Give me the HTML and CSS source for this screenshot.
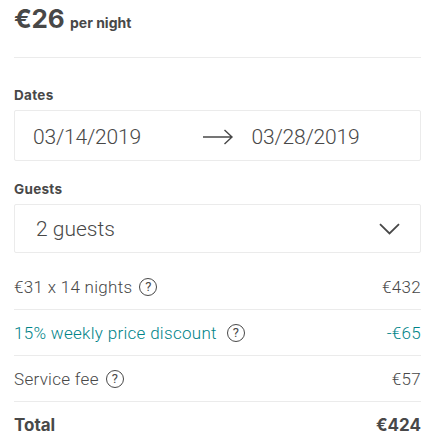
FILE: index.html
```html
<!DOCTYPE html>
<html>
<head>
<meta charset="utf-8">
<link rel="stylesheet" href="styles.css">
</head>
<body>
<div class="panel">
  <div class="price-head">
    <span class="price">€26</span>
    <span class="per">per night</span>
  </div>
  <hr class="divider">
  <div class="label label-dates">Dates</div>
  <div class="field dates">
    <div class="date date-start">03/14/2019</div>
    <svg class="arrow" width="32" height="16" viewBox="0 0 32 16" aria-hidden="true">
      <path d="M1 8 H30 M22.5 1 L30 8 L22.5 15" fill="none" stroke="#484848" stroke-width="1.4"/>
    </svg>
    <div class="date date-end">03/28/2019</div>
  </div>
  <div class="label label-guests">Guests</div>
  <div class="field guests">
    <div class="guests-text">2 guests</div>
    <svg class="chevron" width="21" height="12" viewBox="0 0 21 12" aria-hidden="true">
      <path d="M1 1.2 L10.5 10.5 L20 1.2" fill="none" stroke="#484848" stroke-width="1.8"/>
    </svg>
  </div>
  <div class="rows">
    <div class="row">
      <div class="row-left">€31 x 14 nights <span class="help">?</span></div>
      <div class="row-right">€432</div>
    </div>
    <div class="row discount">
      <div class="row-left">15% weekly price discount <span class="help">?</span></div>
      <div class="row-right">-€65</div>
    </div>
    <div class="row">
      <div class="row-left">Service fee <span class="help">?</span></div>
      <div class="row-right">€57</div>
    </div>
    <div class="row total">
      <div class="row-left">Total</div>
      <div class="row-right">€424</div>
    </div>
  </div>
</div>
</body>
</html>
```

FILE: styles.css
```css
html, body {
  margin: 0;
  padding: 0;
  background: #ffffff;
}
body {
  font-family: Roboto, "Liberation Sans", Arial, sans-serif;
  color: #484848;
}
.panel {
  width: 407px;
  padding: 0 15px 0 14px;
}
.price-head {
  height: 36px;
  line-height: 37px;
  white-space: nowrap;
  font-family: Inter, Roboto, sans-serif;
}
.price {
  font-size: 26px;
  font-weight: 700;
  letter-spacing: -0.2px;
}
.per {
  font-size: 14px;
  font-weight: 700;
  margin-left: 1px;
}
.divider {
  border: 0;
  border-top: 1px solid #ebebeb;
  margin: 21px 0 0;
  height: 0;
}
.label {
  font-family: Inter, Roboto, sans-serif;
  font-size: 13.5px;
  font-weight: 700;
  line-height: 16px;
  letter-spacing: 0.3px;
}
.label-dates {
  margin-top: 29px;
}
.label-guests {
  margin-top: 20px;
}
.field {
  margin-top: 7px;
  border: 1px solid #ebebeb;
  border-radius: 2px;
  display: flex;
  align-items: center;
  box-sizing: border-box;
}
.dates {
  height: 51px;
  padding-top: 2px;
}
.date {
  flex: 1;
  font-size: 21px;
  font-weight: 300;
  letter-spacing: -0.2px;
  padding-left: 18px;
}
.arrow {
  display: block;
  flex: none;
}
.guests {
  height: 49px;
  justify-content: space-between;
  padding: 0 20px 0 21px;
}
.guests-text {
  font-size: 21px;
  font-weight: 300;
}
.chevron {
  display: block;
}
.rows {
  margin-top: 22px;
}
.row {
  display: flex;
  justify-content: space-between;
  align-items: center;
  font-size: 17px;
  font-weight: 300;
  line-height: 24px;
  letter-spacing: 0.3px;
  padding: 0 0 10px;
}
.row + .row {
  border-top: 1px solid #ebebeb;
  padding-top: 11px;
}
.row-left {
  display: flex;
  align-items: center;
  white-space: nowrap;
}
.help {
  display: inline-flex;
  align-items: center;
  justify-content: center;
  width: 16px;
  height: 16px;
  margin-left: 7px;
  border: 1px solid #484848;
  border-radius: 50%;
  font-size: 13px;
  line-height: 16px;
  letter-spacing: 0;
  color: #484848;
  font-weight: 400;
}
.discount .row-left,
.discount .row-right {
  color: #008489;
}
.discount .help {
  margin-left: 10px;
}
.total {
  font-family: Inter, Roboto, sans-serif;
  font-weight: 700;
  letter-spacing: 0;
}
```
